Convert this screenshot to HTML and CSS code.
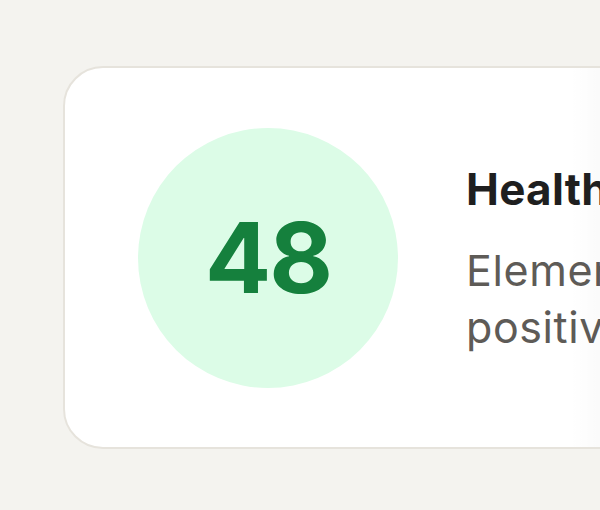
FILE: index.html
```html
<!DOCTYPE html>
<html lang="en">
<head>
  <meta charset="UTF-8" />
  <meta name="viewport" content="width=device-width, initial-scale=1.0" />
  <title>Health Score</title>
  <link rel="stylesheet" href="styles.css">
</head>
<body>
  <div class="card">
    <div class="score">48</div>
    <div class="info">
      <h2>Health Score</h2>
      <p>Elements trending positive overall.</p>
    </div>
  </div>
</body>
</html>
```

FILE: styles.css
```css
body {
  font-family: Inter, "Noto Sans", sans-serif;
  margin: 0;
  padding: 0;
  background: #f4f3ef;
  overflow: hidden;
}
.card {
  position: relative;
  display: flex;
  align-items: center;
  gap: 68px;
  margin: 66px 0 0 63px;
  width: 760px;
  height: 379px;
  padding: 0 0 0 73px;
  background: #fff;
  border: 2px solid #e6e3dc;
  border-radius: 40px;
}
.card::after {
  content: "";
  position: absolute;
  top: 0;
  bottom: 0;
  left: 505px;
  width: 40px;
  background: linear-gradient(to right, rgba(0,0,0,0), rgba(0,0,0,0.025));
}
.score {
  flex: none;
  width: 260px;
  height: 260px;
  border-radius: 50%;
  background: #dcfce7;
  color: #15803d;
  font-size: 98px;
  font-weight: 700;
  letter-spacing: -2px;
  display: flex;
  align-items: center;
  justify-content: center;
}
.info {
  padding-top: 4px;
}
.info h2 {
  margin: 0 0 26px;
  font-size: 44px;
  font-weight: 700;
  color: #1f1f1f;
  line-height: 1.2;
  letter-spacing: 0.3px;
}
.info p {
  margin: 0;
  width: 450px;
  font-size: 43px;
  line-height: 57px;
  letter-spacing: 0.6px;
  color: #5e5b57;
}
```
